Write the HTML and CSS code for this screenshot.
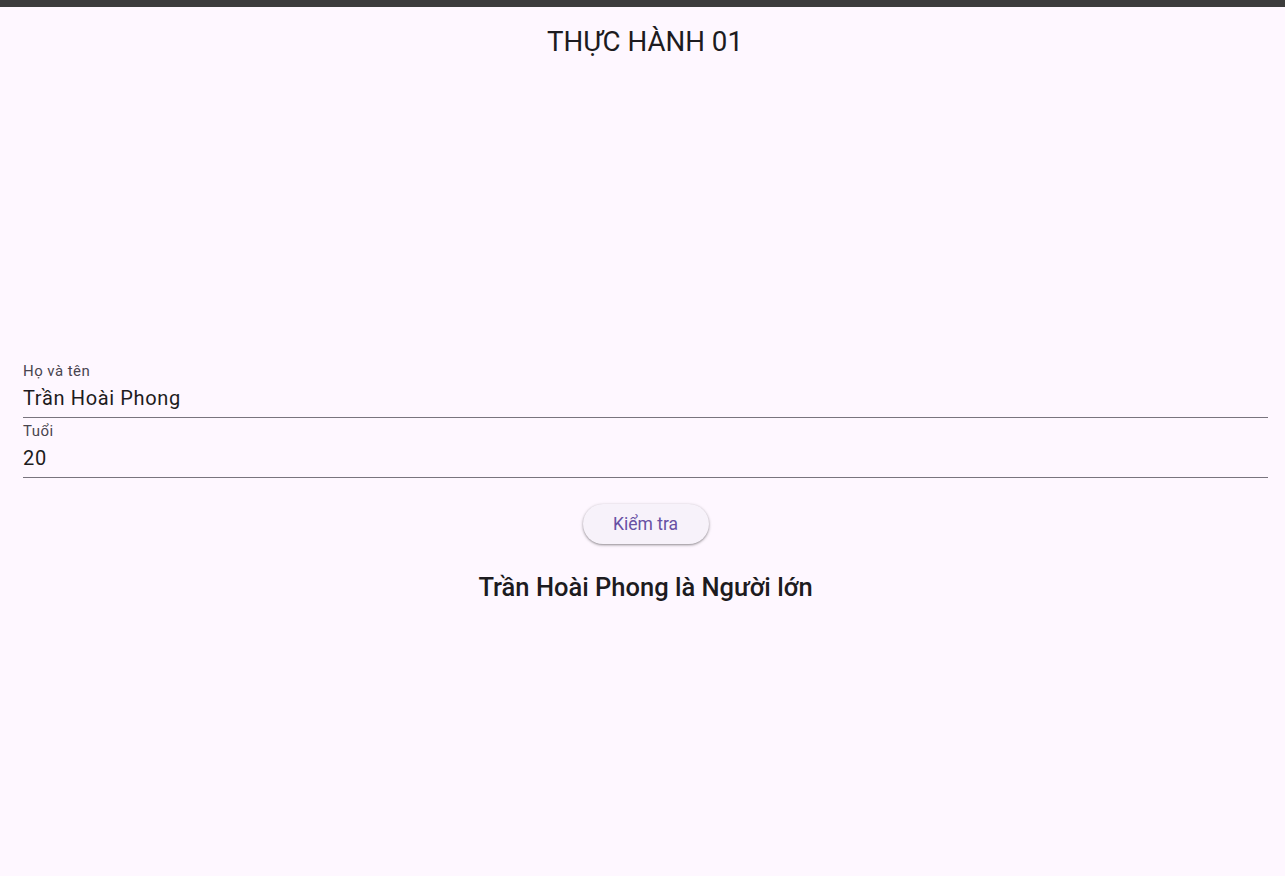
FILE: index.html
```html
<!DOCTYPE html>
<html lang="vi">
<head>
<meta charset="utf-8">
<link rel="stylesheet" href="styles.css">
</head>
<body>
<div class="topbar"></div>
<main class="page">
  <h1 class="title">THỰC HÀNH 01</h1>
  <section class="form">
    <div class="field">
      <div class="label">Họ và tên</div>
      <div class="value">Trần Hoài Phong</div>
    </div>
    <div class="field">
      <div class="label">Tuổi</div>
      <div class="value">20</div>
    </div>
    <div class="actions">
      <button class="btn">Kiểm tra</button>
    </div>
    <p class="result">Trần Hoài Phong là Người lớn</p>
  </section>
</main>
</body>
</html>
```

FILE: styles.css
```css
html, body {
  margin: 0;
  padding: 0;
  background: #fef7ff;
  font-family: Roboto, "Noto Sans", sans-serif;
  color: #1d1b20;
  height: 100%;
}
.topbar {
  height: 7px;
  background: #3c3c3c;
}
.page {
  display: flex;
  flex-direction: column;
}
.title {
  margin: 0;
  padding: 22px 0 0 5px;
  text-align: center;
  font-size: 27.7px;
  font-weight: 400;
  line-height: 26px;
  color: #1d1b20;
}
.form {
  margin-top: 307px;
  padding: 0 17px 0 23px;
  display: flex;
  flex-direction: column;
}
.field {
  border-bottom: 1px solid #79747e;
  padding-bottom: 8px;
}
.field + .field {
  margin-top: 4px;
}
.label {
  font-size: 15px;
  line-height: 18px;
  letter-spacing: 0.45px;
  color: #49454f;
}
.value {
  margin-top: 7px;
  font-size: 20px;
  line-height: 22px;
  letter-spacing: 0.65px;
  color: #1d1b20;
}
.actions {
  display: flex;
  justify-content: center;
  margin-top: 26px;
}
.btn {
  height: 40px;
  width: 126px;
  border: none;
  border-radius: 20px;
  background: #f7f2fa;
  color: #6750a4;
  font-family: Roboto, "Noto Sans", sans-serif;
  font-size: 17.5px;
  font-weight: 400;
  box-shadow: 0 1px 2px rgba(0,0,0,0.3), 0 1px 3px 1px rgba(0,0,0,0.12);
  padding: 0;
}
.result {
  margin: 28px 0 0 0;
  text-align: center;
  font-size: 25.5px;
  font-weight: 500;
  line-height: 30px;
  color: #1d1b20;
}
```
